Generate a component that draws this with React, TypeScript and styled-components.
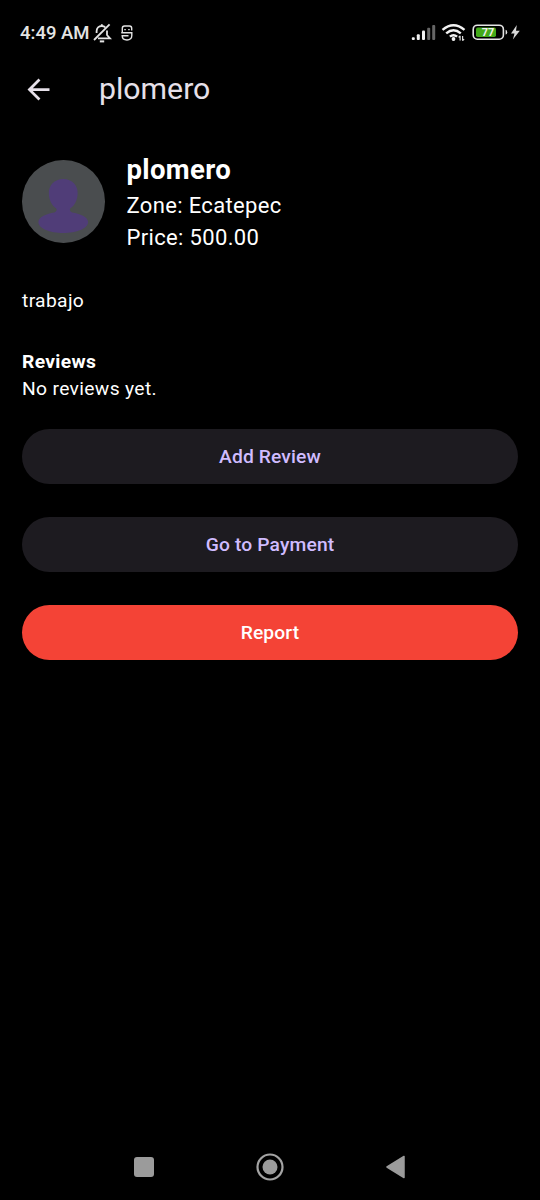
import React from 'react';
import styled, { createGlobalStyle } from 'styled-components';

const GlobalStyle = createGlobalStyle`
  * { box-sizing: border-box; }
  html, body { margin: 0; background: #000; }
  body { font-family: Roboto, sans-serif; color: #fff; }
  svg { display: block; }
`;

const Screen = styled.div`
  width: 540px;
  height: 1200px;
  background: #000;
  display: flex;
  flex-direction: column;
  overflow: hidden;
`;

const StatusBar = styled.div`
  height: 51px;
  padding: 14px 19px 0 20px;
  display: flex;
  justify-content: space-between;
  align-items: flex-start;
  color: #e4e4e4;
`;

const StatusGroup = styled.div`
  display: flex;
  align-items: center;
  height: 38px;
`;

const Clock = styled.span`
  font-size: 18.5px;
  font-weight: 500;
  line-height: 38px;
  width: 72px;
  white-space: nowrap;
`;

const MascotSlot = styled.span`
  margin-left: 9px;
`;

const AppBar = styled.header`
  height: 77px;
  padding-left: 22px;
  display: flex;
  align-items: center;
`;

const BackButton = styled.button`
  width: 33px;
  height: 33px;
  padding: 0;
  border: 0;
  background: none;
  color: #e6e0e9;
`;

const Title = styled.h1`
  margin: 0 0 0 44px;
  font-size: 30.25px;
  line-height: 38.5px;
  font-weight: 400;
  color: #e6e0e9;
`;

const Content = styled.main`
  flex: 1;
  padding: 22px;
  display: flex;
  flex-direction: column;
`;

const Profile = styled.section`
  display: flex;
  align-items: center;
  gap: 22px;
  margin-bottom: 33.8px;
`;

const Avatar = styled.div`
  width: 82.5px;
  height: 82.5px;
  border-radius: 50%;
  background: #4a4d4f;
  overflow: hidden;
`;

const Name = styled.div`
  margin-bottom: 1.1px;
  font-size: 27.5px;
  line-height: 39.3px;
  font-weight: 700;
  letter-spacing: 0.34px;
`;

const Detail = styled.div`
  font-size: 22px;
  line-height: 31.43px;
  letter-spacing: 0.34px;
`;

const Text = styled.p<{ $bold?: boolean; $gap?: string }>`
  margin: 0 0 ${(p) => p.$gap ?? '0'};
  font-size: 19.25px;
  line-height: 27.5px;
  font-weight: ${(p) => (p.$bold ? 700 : 400)};
  letter-spacing: 0.34px;
`;

const Actions = styled.div`
  display: flex;
  flex-direction: column;
  gap: 33px;
`;

const Button = styled.button<{ $danger?: boolean }>`
  height: 55px;
  padding: 0;
  border: 0;
  border-radius: 28px;
  background: ${(p) => (p.$danger ? '#f44336' : '#1d1b20')};
  color: ${(p) => (p.$danger ? '#fff' : '#d0bcff')};
  font: 500 19.25px/27.5px Roboto, sans-serif;
  letter-spacing: 0.14px;
`;

const NavBar = styled.nav`
  height: 66px;
  padding: 0 134px;
  display: flex;
  align-items: center;
  justify-content: space-between;
`;

const BellOff = () => (
  <svg width="20" height="22" viewBox="0 0 20 22" fill="none" stroke="currentColor" strokeWidth="1.8">
    <path d="M4.6 11V9.2C4.6 5.8 6.8 4 9.8 4C11.4 4 12.6 4.6 13.4 5.5" />
    <path d="M15 8.5V13L18 16.3H6" />
    <path d="M17.6 2.4L2 18" />
    <path d="M9.8 2.2V4" />
    <path d="M7.8 19.4H12.2" strokeWidth="2" />
  </svg>
);

const Mascot = () => (
  <svg width="12" height="16" viewBox="0 0 12 16" fill="none" stroke="currentColor" strokeWidth="1.4">
    <path d="M0.3 7.8H10.8V10.5C10.8 13.4 9 15 6 15C3 15 1.2 13.4 1.2 10.8H7.5" />
    <path d="M1.3 7.8V3.2Q1.3 1 3.5 1H8.5Q10.7 1 10.7 3.2V5.6" />
    <path d="M3.3 4.6H4.8M7.2 4.6H8.7" />
  </svg>
);

const StatusIcons = () => (
  <svg width="112" height="38" viewBox="0 0 112 38">
    <g fill="#f2f2f2">
      <rect x="2.8" y="23.2" width="3" height="2.8" rx="1" />
      <rect x="7.8" y="20.2" width="3" height="5.8" rx="1" />
      <rect x="13" y="16.6" width="3" height="9.4" rx="1" />
      <rect x="18.2" y="13.8" width="3" height="12.2" rx="1" fill="#666" />
      <rect x="23.2" y="11" width="3" height="15" rx="1" fill="#666" />
    </g>
    <g fill="none" stroke="#f2f2f2" strokeWidth="2.4">
      <path d="M33.5 15.8Q44.5 6.6 55.5 15.8" />
      <path d="M37.2 19.4Q44.5 13.1 51.8 19.4" />
      <path d="M40.9 22.7Q44.5 19.6 48.1 22.7" />
    </g>
    <circle cx="44.5" cy="25" r="1.9" fill="#f2f2f2" />
    <path d="M51.1 26.5V21.8M49.6 23.3L51.1 21.8M53.6 22V26.7M55.1 25.2L53.6 26.7" fill="none" stroke="#ddd" strokeWidth="1.2" />
    <rect x="64.2" y="11.2" width="30.2" height="14" rx="4.2" fill="none" stroke="#e5e5e5" strokeWidth="1.6" />
    <rect x="67" y="13.6" width="20" height="9.4" rx="1.8" fill="#43aa19" />
    <path d="M96.6 15.8Q98.2 16 98.2 18.2Q98.2 20.4 96.6 20.6Z" fill="#e5e5e5" />
    <text x="79" y="22.2" textAnchor="middle" fontFamily="Roboto, sans-serif" fontSize="11" fontWeight="700" fill="#f1f1f1">77</text>
    <path d="M107.8 11L102 19.4H105.5L103.9 25.6L110.8 16.8H107Z" fill="#d8d8d8" />
  </svg>
);

const BackArrow = () => (
  <svg width="33" height="33" viewBox="0 0 24 24" fill="currentColor">
    <path d="M20 11H7.83l5.59-5.59L12 4l-8 8 8 8 1.41-1.41L7.83 13H20v-2z" />
  </svg>
);

const Person = () => (
  <svg width="82.5" height="82.5" viewBox="0 0 83 83" fill="#503d78">
    <path d="M41.5 19C50.5 19 56.5 25.5 56 34C55.7 40.5 53 46 48.5 48.8C47.5 50.5 48.5 52 50.5 52.7C58 54 66.5 57 66.5 62.5C66.5 69 55 73.5 41.5 73.5C28 73.5 16.5 69 16.5 62.5C16.5 57 25 54 32.5 52.7C34.5 52 35.5 50.5 34.5 48.8C30 46 27.3 40.5 27 34C26.5 25.5 32.5 19 41.5 19Z" />
  </svg>
);

export default function App() {
  return (
    <Screen>
      <GlobalStyle />
      <StatusBar>
        <StatusGroup>
          <Clock>4:49 AM</Clock>
          <BellOff />
          <MascotSlot><Mascot /></MascotSlot>
        </StatusGroup>
        <StatusIcons />
      </StatusBar>
      <AppBar>
        <BackButton aria-label="Back"><BackArrow /></BackButton>
        <Title>plomero</Title>
      </AppBar>
      <Content>
        <Profile>
          <Avatar><Person /></Avatar>
          <div>
            <Name>plomero</Name>
            <Detail>Zone: Ecatepec</Detail>
            <Detail>Price: 500.00</Detail>
          </div>
        </Profile>
        <Text $gap="33px">trabajo</Text>
        <Text $bold>Reviews</Text>
        <Text $gap="26.9px">No reviews yet.</Text>
        <Actions>
          <Button>Add Review</Button>
          <Button>Go to Payment</Button>
          <Button $danger>Report</Button>
        </Actions>
      </Content>
      <NavBar>
        <svg width="20" height="20" viewBox="0 0 20 20"><rect width="20" height="20" rx="3" fill="#9b9b9b" /></svg>
        <svg width="28" height="28" viewBox="0 0 28 28">
          <circle cx="14" cy="14" r="12.5" fill="none" stroke="#a3a3a3" strokeWidth="2.2" />
          <circle cx="14" cy="14" r="7.5" fill="#9b9b9b" />
        </svg>
        <svg width="20" height="24" viewBox="0 0 20 24"><path d="M1 12L18 1.5V22.5Z" fill="#9b9b9b" stroke="#9b9b9b" strokeWidth="1.5" strokeLinejoin="round" /></svg>
      </NavBar>
    </Screen>
  );
}
